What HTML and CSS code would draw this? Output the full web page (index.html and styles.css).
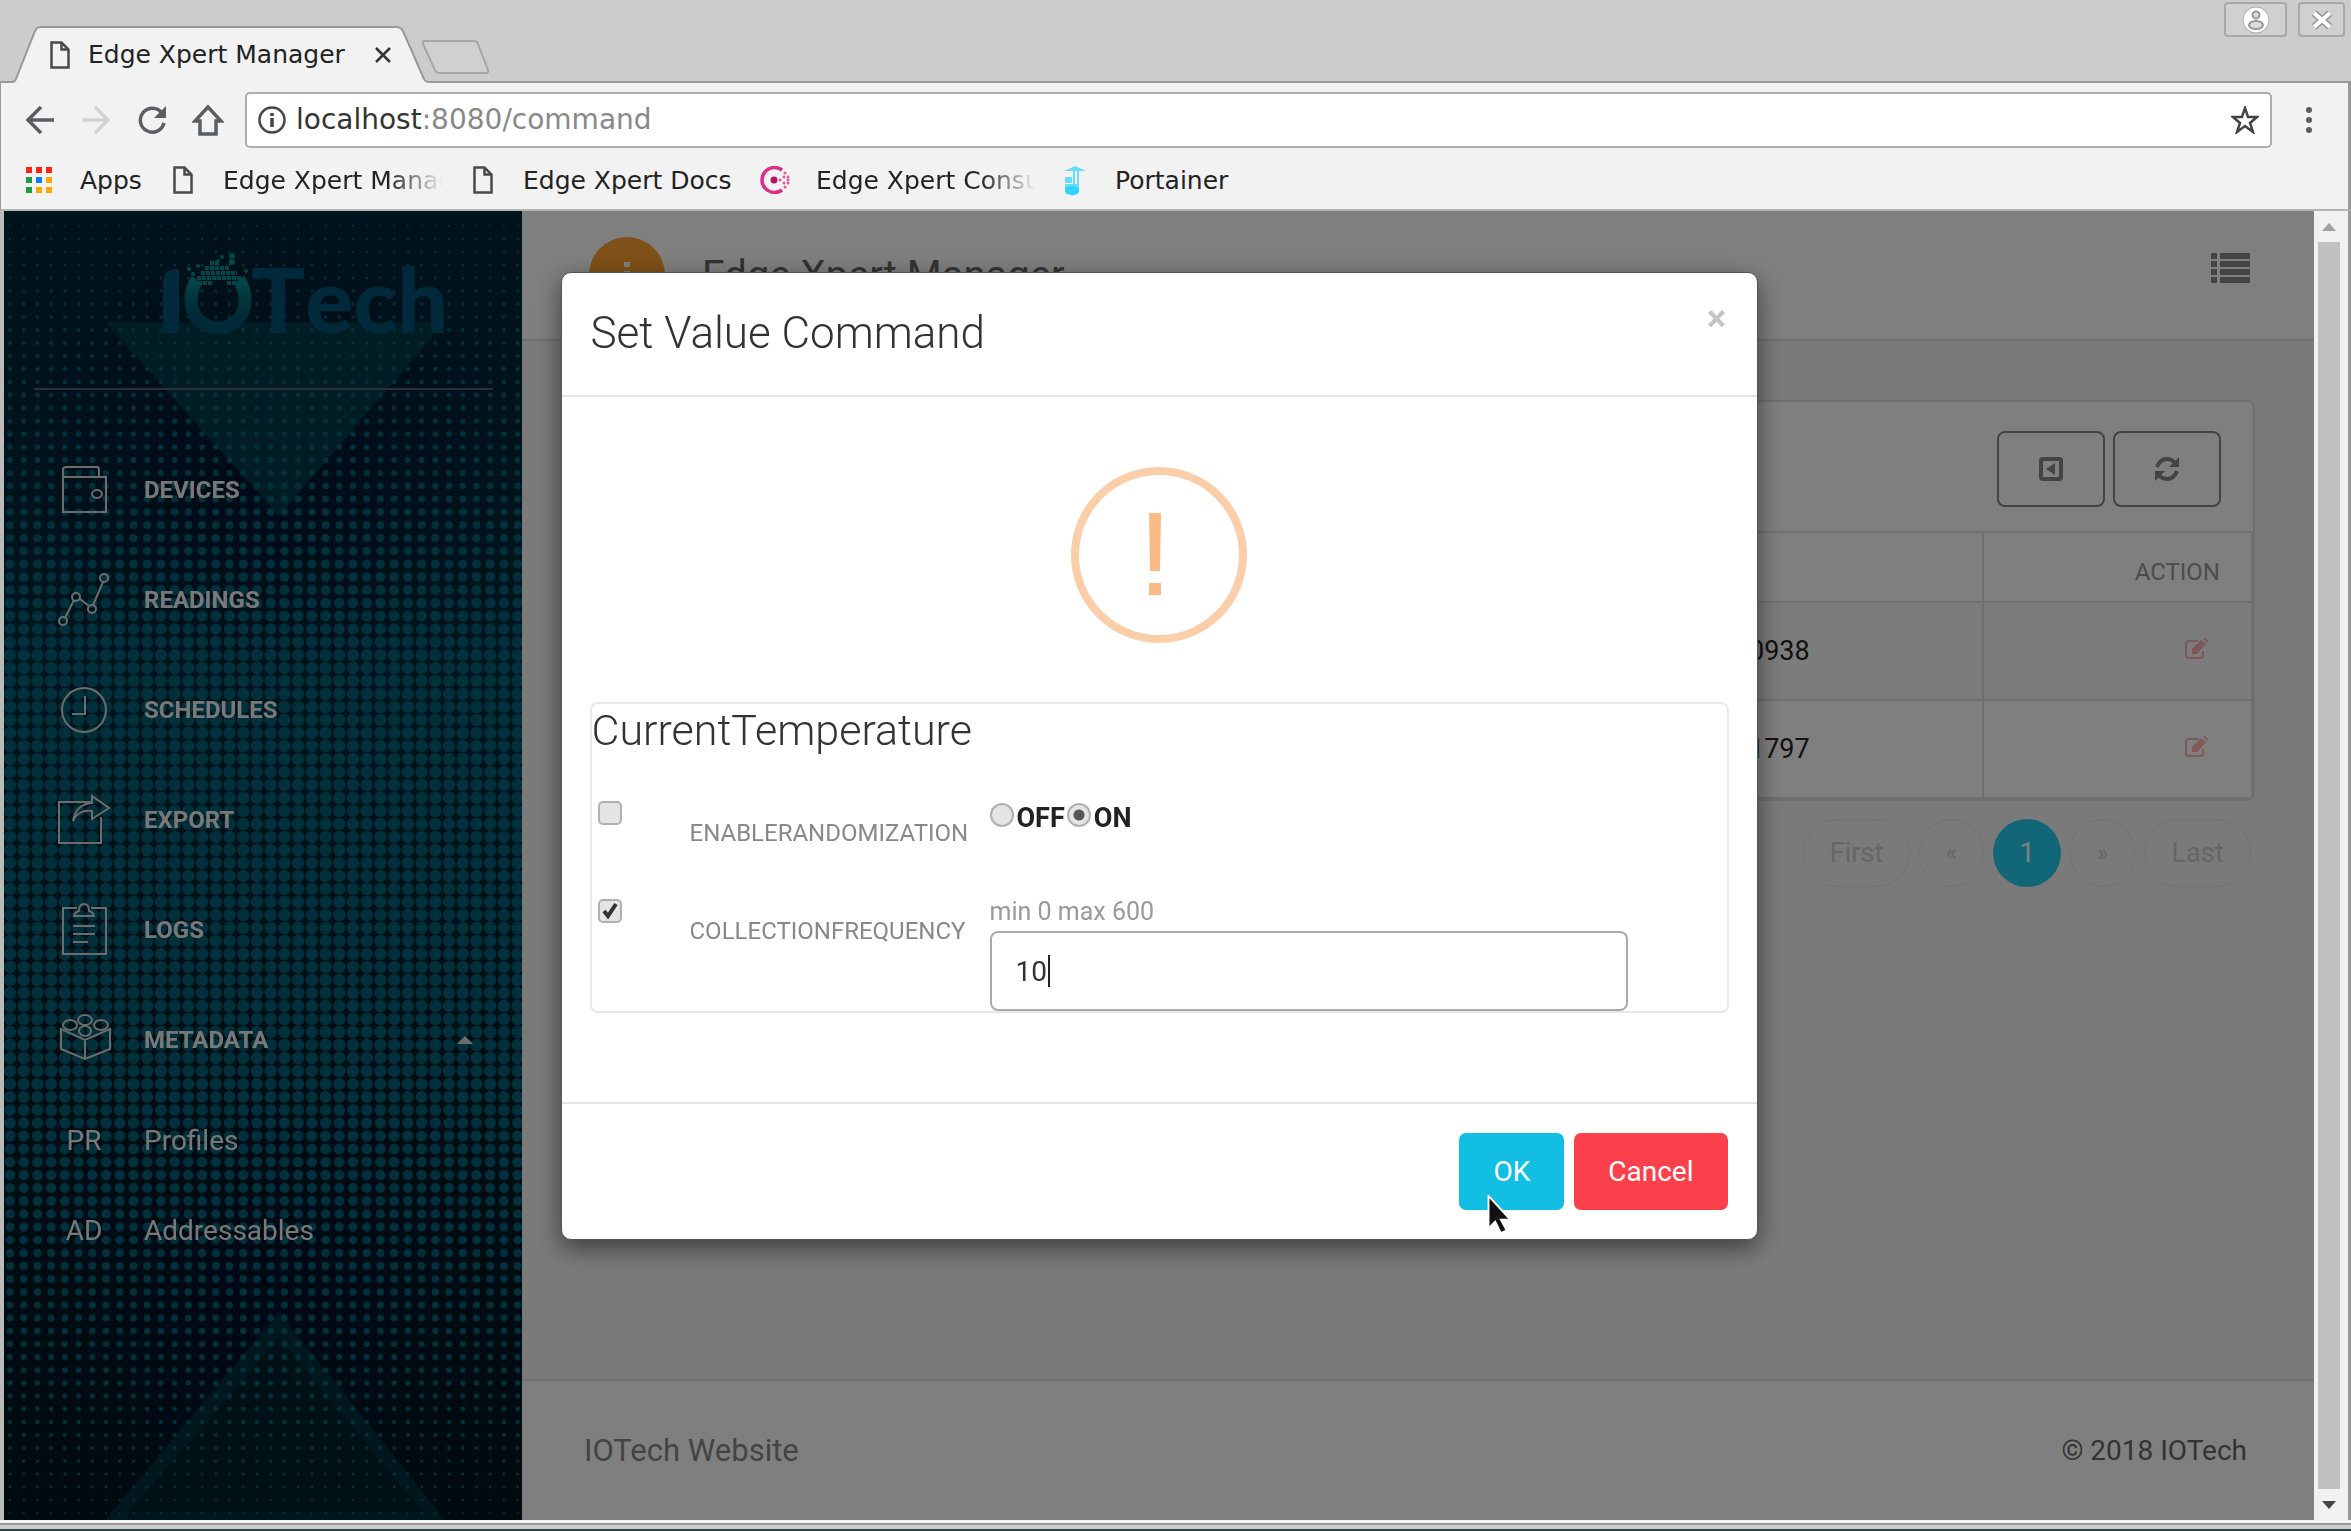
FILE: index.html
```html
<!DOCTYPE html>
<html lang="en">
<head>
<meta charset="utf-8">
<title>Edge Xpert Manager</title>
<link rel="stylesheet" href="styles.css">
</head>
<body>
<svg class="defs" aria-hidden="true">
  <symbol id="doc" viewBox="0 0 20 28"><path d="M1.5 1.5h10l7 7v18h-17zM11.500 1.500v7h7" fill="none" stroke="#4a4a4a" stroke-width="2.500"/></symbol>
  <symbol id="edit" viewBox="0 0 24 22"><path d="M14 3H5Q2 3 2 6v11q0 3 3 3h11q3 0 3-3v-4" fill="none" stroke="currentColor" stroke-width="2"/><path d="M8 16v-5l9-9 5 4-9 10zM19 0l1-1 4 4-1 2z" fill="currentColor"/></symbol>
</svg>
<div class="browser">
  <header class="tabstrip">
    <div class="tab">
      <svg class="tab-shape" viewBox="0 0 430 57" preserveAspectRatio="none"><path d="M-8 56H12Q15 56 16 53L35 5Q37 1 41 1H396Q401 1 403 5L424 53Q425 56 430 56V58H-8Z" fill="#f2f2f2" stroke="#989898" stroke-width="2"/></svg>
      <svg class="doc"><use href="#doc"/></svg>
      <span class="tab-title">Edge Xpert Manager</span>
      <button class="plain tab-close" aria-label="Close tab"><svg width="18" height="18" viewBox="0 0 18 18"><path d="M2 2l14 14M16 2L2 16" stroke="#333" stroke-width="2.500"/></svg></button>
    </div>
    <button class="plain new-tab" aria-label="New tab"><svg width="70" height="36" viewBox="0 0 70 36"><path d="M4 2H54Q57 2 58 5L68 31Q69 34 66 34H20Q16 34 15 31L3 5Q2 2 4 2Z" fill="#d0d0d0" stroke="#a6a6a6" stroke-width="2"/></svg></button>
    <div class="window-buttons">
      <button class="win-btn user" aria-label="Profile"><svg width="28" height="28" viewBox="0 0 28 28"><circle cx="14" cy="14" r="13" fill="#fff" stroke="#aaa"/><circle cx="14" cy="9" r="3.500" fill="#ddd" stroke="#999" stroke-width="2"/><ellipse cx="14" cy="19" rx="7" ry="4" fill="#ddd" stroke="#999" stroke-width="2"/></svg></button>
      <button class="win-btn" aria-label="Close window"><svg width="22" height="20" viewBox="0 0 22 20"><path d="M3 3l16 14M19 3L3 17" stroke="#9a9a9a" stroke-width="7"/><path d="M3 3l16 14M19 3L3 17" stroke="#fff" stroke-width="4"/></svg></button>
    </div>
  </header>
  <div class="toolbar">
    <button class="plain" aria-label="Back"><svg width="28" height="28" viewBox="0 0 28 28"><path d="M15 1L2 14l13 13M2 14h26" fill="none" stroke="#5a5d62" stroke-width="3.500"/></svg></button>
    <button class="plain" aria-label="Forward"><svg width="28" height="28" viewBox="0 0 28 28"><path d="M13 1l13 13-13 13M26 14H0" fill="none" stroke="#d3d3d3" stroke-width="3.500"/></svg></button>
    <button class="plain" aria-label="Reload"><svg width="28" height="28" viewBox="0 0 28 28"><path d="M24 7A12 12 0 1 0 26 17" fill="none" stroke="#5a5d62" stroke-width="3.500"/><path d="M28 0v12H16z" fill="#5a5d62"/></svg></button>
    <button class="plain home" aria-label="Home"><svg width="32" height="32" viewBox="0 0 32 32"><path d="M16 3L3 17h5v13h16V17h5z" fill="none" stroke="#5a5d62" stroke-width="3.500"/></svg></button>
    <div class="address">
      <svg width="28" height="28" viewBox="0 0 28 28"><circle cx="14" cy="14" r="12.500" fill="none" stroke="#444" stroke-width="2.500"/><path d="M14 12v9M14 7v3" stroke="#444" stroke-width="3.500"/></svg>
      <a class="url" href="#">localhost<span>:8080/command</span></a>
      <button class="plain" aria-label="Bookmark"><svg width="28" height="28" viewBox="0 0 28 28"><path d="M14 2l3 9h9l-7 6 3 9-8-6-8 6 3-9-7-6h9z" fill="none" stroke="#444" stroke-width="2.500"/></svg></button>
    </div>
    <button class="plain menu" aria-label="Menu"><svg width="8" height="28" viewBox="0 0 8 28"><circle cx="4" cy="4" r="3" fill="#5a5d62"/><circle cx="4" cy="14" r="3" fill="#5a5d62"/><circle cx="4" cy="24" r="3" fill="#5a5d62"/></svg></button>
  </div>
  <nav class="bookmarks">
    <a href="#" class="apps"><svg width="26" height="26" viewBox="0 0 26 26"><path d="M0 0h6v6H0zM10 0h6v6h-6zM20 0h6v6h-6z" fill="#fb2418"/><path d="M0 10h6v6H0zM0 20h6v6H0z" fill="#1e9a45"/><path d="M10 10h6v6h-6z" fill="#0b7cff"/><path d="M20 10h6v6h-6zM10 20h6v6h-6zM20 20h6v6h-6z" fill="#fba800"/></svg>Apps</a>
    <a href="#"><svg class="doc"><use href="#doc"/></svg><span class="clip">Edge Xpert Manager</span></a>
    <a href="#" class="docs"><svg class="doc"><use href="#doc"/></svg>Edge Xpert Docs</a>
    <a href="#" class="consul"><svg width="30" height="28" viewBox="0 0 30 28"><path d="M22 4A12.500 12.500 0 1 0 22 24" fill="none" stroke="#db2f87" stroke-width="3.500"/><circle cx="14" cy="14" r="3.500" fill="#a8195f"/><g fill="#db5a9e"><circle cx="20" cy="14" r="1.500"/><circle cx="24" cy="11" r="1.500"/><circle cx="24" cy="17" r="1.500"/><circle cx="25" cy="7" r="1.500"/><circle cx="25" cy="21" r="1.500"/><circle cx="28" cy="11" r="1.500"/><circle cx="28" cy="17" r="1.500"/><circle cx="28" cy="14" r="1.500"/></g></svg><span class="clip">Edge Xpert Consul</span></a>
    <a href="#" class="portainer"><svg width="24" height="32" viewBox="0 0 24 32"><path d="M1 7L12 2l11 5zM10 4h2v20h-2zM14 6h2v20h-2zM2 13h7v6H2zM2 20h13v6H2z" fill="#6adcfb"/><path d="M2 24q7-4 14 0v4q-3 4-8 3-5-1-6-3z" fill="#2fd3ff"/></svg>Portainer</a>
  </nav>
  <div class="viewport">
    <aside class="sidebar">
      <canvas class="dots"></canvas>
      <div class="brand">
        <svg class="logo" viewBox="0 0 290 90" role="img" aria-label="IOTech">
          <defs><linearGradient id="ring" x1="0" y1="0" x2="0" y2="1"><stop offset="0" stop-color="#008f8f"/><stop offset=".4" stop-color="#006c78"/><stop offset=".75" stop-color="#00546e"/></linearGradient></defs>
          <path d="M8 84V36Q8 20 20 20h4v64z" fill="#005478"/>
          <path d="M42 31Q36 39 36 52a27 27 0 0 0 54 0Q90 39 84 31" fill="none" stroke="url(#ring)" stroke-width="13"/>
          <g stroke="#008f8f" stroke-width="4" stroke-dasharray="4 1"><path d="M43 34h14M72 34h15M42 29h44M46 24h36M50 19h25M55 14h10"/></g>
          <g fill="#008f8f"><circle cx="34" cy="20" r="2"/><circle cx="38" cy="25" r="2"/><circle cx="43" cy="17" r="2"/><circle cx="67" cy="8" r="2"/><circle cx="77" cy="7" r="3"/><circle cx="77" cy="13" r="3"/><circle cx="63" cy="12" r="2"/><circle cx="91" cy="22" r="2"/></g>
          <text x="96" y="84" class="logo-text">Tech</text>
        </svg>
      </div>
      <nav>
        <a class="item" href="#"><svg viewBox="0 0 52 52"><rect x="5" y="13" width="43" height="35"/><path d="M5 13V6q0-3 3-3h31q2 0 2 3v7"/><ellipse cx="39" cy="30" rx="5" ry="4"/></svg>Devices</a>
        <a class="item" href="#"><svg viewBox="0 0 52 52"><circle cx="5" cy="47" r="4"/><circle cx="18" cy="23" r="4"/><circle cx="34" cy="35" r="4"/><circle cx="46" cy="4" r="4"/><path d="M7 44l9-18M22 25l9 7M35 31L45 8"/></svg>Readings</a>
        <a class="item" href="#"><svg viewBox="0 0 52 52"><circle cx="26" cy="26" r="22"/><path d="M27 12v18H14"/></svg>Schedules</a>
        <a class="item" href="#"><svg viewBox="0 0 52 52"><path d="M34 8H1v41h42V23"/><path d="M15 27Q18 10 34 9V2l17 12-17 11v-8Q20 15 15 27z"/></svg>Export</a>
        <a class="item" href="#"><svg viewBox="0 0 52 52"><path d="M19 4H5v46h43V4H33M16 12q1-4 5-5 0-7 5-7t5 7q4 1 5 5zM15 22h22M15 30h22M15 38h15"/></svg>Logs</a>
        <a class="item" href="#"><svg viewBox="0 0 52 52"><path d="M3 15v20l24 10 25-10V15L27 26zM27 26v19"/><ellipse cx="27" cy="6" rx="7" ry="5"/><ellipse cx="12" cy="11" rx="7" ry="5"/><ellipse cx="43" cy="11" rx="7" ry="5"/><ellipse cx="27" cy="17" rx="6" ry="5"/></svg>Metadata<i class="caret-up"></i></a>
        <a class="sub" href="#"><span>PR</span>Profiles</a>
        <a class="sub" href="#"><span>AD</span>Addressables</a>
      </nav>
    </aside>
    <main class="main">
      <header class="page-head">
        <span class="badge"><svg width="8" height="30" viewBox="0 0 8 30"><path d="M1 2h6v5H1zM1 11h6v18H1z" fill="#fff"/></svg></span>
        <h1>Edge Xpert Manager</h1>
        <button class="plain list" aria-label="List"><svg width="40" height="32" viewBox="0 0 40 32"><path d="M0 0h6v6H0zM9 0h30v6H9zM0 8h6v6H0zM9 8h30v6H9zM0 16h6v6H0zM9 16h30v6H9zM0 24h6v6H0zM9 24h30v6H9z" fill="#888"/></svg></button>
      </header>
      <section class="content">
        <div class="card">
          <div class="card-tools">
            <button class="outline" aria-label="Back"><svg width="24" height="24" viewBox="0 0 24 24"><rect x="2" y="2" width="20" height="20" rx="2" fill="none" stroke="#888" stroke-width="4"/><path d="M16 6v12l-9-6z" fill="#888"/></svg></button>
            <button class="outline" aria-label="Refresh"><svg width="26" height="24" viewBox="0 0 26 24"><path d="M3 10Q6 2 13 2q5 0 8 4M23 14q-3 8-10 8-5 0-8-4" fill="none" stroke="#888" stroke-width="4"/><path d="M25 0v10H15zM1 24V14h10z" fill="#888"/></svg></button>
          </div>
          <table>
            <thead><tr><th></th><th class="id"></th><th class="action">Action</th></tr></thead>
            <tbody>
              <tr><td></td><td class="id">0938</td><td class="action"><a href="#" aria-label="Edit"><svg width="24" height="22"><use href="#edit"/></svg></a></td></tr>
              <tr><td></td><td class="id">1797</td><td class="action"><a href="#" aria-label="Edit"><svg width="24" height="22"><use href="#edit"/></svg></a></td></tr>
            </tbody>
          </table>
        </div>
        <nav class="pager">
          <a href="#" class="wide">First</a><a href="#" class="small">«</a><a href="#" class="on">1</a><a href="#" class="small">»</a><a href="#" class="wide">Last</a>
        </nav>
      </section>
      <footer class="page-foot"><a href="#">IOTech Website</a><span>© 2018 IOTech</span></footer>
    </main>
    <div class="overlay">
      <form class="modal" role="dialog" aria-labelledby="dlg">
        <div class="modal-head"><h2 id="dlg">Set Value Command</h2><button type="button" class="plain close" aria-label="Close">×</button></div>
        <div class="modal-body">
          <svg class="warn" viewBox="0 0 176 176" role="img" aria-label="Warning"><circle cx="88" cy="88" r="84" fill="none" stroke="#facea8" stroke-width="8"/><path d="M78 46h12l-1 58H79zM78 116h12v12H78z" fill="#f8bb86"/></svg>
          <div class="params">
            <h2>CurrentTemperature</h2>
            <div class="param">
              <input type="checkbox" id="er" class="check">
              <label for="er" class="name">EnableRandomization</label>
              <div class="radios">
                <input type="radio" name="r" id="off"><label for="off">OFF</label><input type="radio" name="r" id="on" checked><label for="on">ON</label>
              </div>
            </div>
            <div class="param">
              <input type="checkbox" id="cf" class="check" checked>
              <label for="cf" class="name">CollectionFrequency</label>
              <div class="field">
                <label for="val">min 0 max 600</label>
                <input type="text" id="val" value="10">
                <i class="text-caret"></i>
              </div>
            </div>
          </div>
        </div>
        <div class="modal-foot">
          <button type="button" class="btn ok">OK<svg class="pointer" viewBox="0 0 26 42"><path d="M2 1v34l7-7 6 12 6-3-6-11h10z" fill="#111" stroke="#fff" stroke-width="2"/></svg></button>
          <button type="button" class="btn cancel">Cancel</button>
        </div>
      </form>
    </div>
    <div class="scrollbar"><button class="plain" aria-label="Scroll up"><i class="up"></i></button><div class="thumb"></div><button class="plain" aria-label="Scroll down"><i class="down"></i></button></div>
  </div>
  <div class="frame-bottom"></div>
</div>
<script src="dots.js"></script>
</body>
</html>
```
FILE: dots.js
```javascript
// Halftone backdrop of the sidebar: dots swell towards the middle, over two triangles.
(function () {
  var canvas = document.querySelector('.dots');
  var w = canvas.width = canvas.clientWidth;
  var h = canvas.height = canvas.clientHeight;
  var c = canvas.getContext('2d');

  function triangle(points, fill) {
    c.beginPath();
    points.forEach(function (p) { c.lineTo(p[0], p[1]); });
    c.closePath();
    c.fillStyle = fill;
    c.fill();
  }

  function glow(x, y, r) {
    var g = c.createRadialGradient(x, y, 0, x, y, r);
    g.addColorStop(0, 'rgba(0,16,42,.8)');
    g.addColorStop(1, 'rgba(0,16,42,0)');
    c.fillStyle = g;
    c.fillRect(0, 0, w, h);
  }

  var base = c.createLinearGradient(0, 0, 0, h);
  base.addColorStop(0, '#002638');
  base.addColorStop(0.35, '#002a3a');
  base.addColorStop(0.65, '#001c26');
  base.addColorStop(1, '#00161e');
  c.fillStyle = base;
  c.fillRect(0, 0, w, h);
  glow(w / 2, 260, 280);
  glow(w / 2, h - 210, 280);

  var mid = w / 2 + 16;
  triangle([[101, 111], [441, 111], [mid, 305]], '#003a46');
  triangle([[mid, h - 208], [mid - 174, h], [mid + 166, h]], '#002e3a');
  triangle([[mid, h - 182], [mid - 150, h - 8], [mid + 144, h - 8]], '#00222a');

  var stops = [[0, 1], [0.1, 2], [0.2, 3], [0.28, 4.8], [0.34, 6.2], [0.66, 6.2], [0.75, 5], [0.83, 3.6], [0.91, 2.5], [1, 1]];
  function radius(t) {
    for (var i = 1; i < stops.length; i++) {
      if (t <= stops[i][0]) {
        var a = stops[i - 1], b = stops[i];
        return a[1] + (b[1] - a[1]) * (t - a[0]) / (b[0] - a[0]);
      }
    }
    return 1;
  }
  for (var y = 15; y < h; y += 13) {
    c.fillStyle = '#006076';
    for (var x = 6; x < w + 6; x += 13.72) {
      c.beginPath();
      c.arc(x, y, radius(y / h), 0, Math.PI * 2);
      c.fill();
    }
  }
})();
```
FILE: styles.css
```css
* { box-sizing: border-box; }
body { margin: 0; font-family: Roboto, sans-serif; font-size: 27px; color: #252422; background: #ccc; }
a { color: inherit; text-decoration: none; }
h1, h2 { margin: 0; font-weight: 300; }
svg { display: block; flex: none; }
.defs { position: absolute; width: 0; height: 0; }
.plain { border: 0; padding: 0; background: none; display: flex; align-items: center; justify-content: center; font: inherit; color: inherit; }
.browser { display: flex; flex-direction: column; min-height: 100vh; font-family: Roboto, sans-serif; }

.tabstrip { display: flex; height: 83px; padding-top: 26px; background: #ccc; font-family: "DejaVu Sans", sans-serif; border-bottom: 2px solid #989898; }
.tab { position: relative; display: flex; align-items: center; width: 430px; height: 57px; padding-left: 50px; font-size: 25px; color: #222; }
.tab-shape { position: absolute; inset: 0; width: 100%; height: 100%; }
.doc { position: relative; width: 20px; height: 28px; }
.tab-title { position: relative; margin-left: 18px; width: 286px; white-space: nowrap; }
.tab-close { position: relative; }
.new-tab { align-self: flex-start; margin: 13px 0 0 -10px; }
.window-buttons { display: flex; gap: 11px; margin: -24px 6px 0 auto; }
.win-btn { display: flex; align-items: center; justify-content: center; width: 47px; height: 35px; padding: 0; border: 2px solid #a8a8a8; border-radius: 4px; background: #d0d0d0; }
.win-btn.user { width: 63px; }

.toolbar { display: flex; align-items: center; gap: 28px; height: 73px; padding: 0 35px 0 25px; border-right: 3px solid #999; border-left: 1px solid #999; background: #f2f2f2; }
.home { margin-left: -2px; }
.address { display: flex; align-items: center; flex: 1; height: 56px; margin-left: -7px; padding: 0 11px; border: 2px solid #adadad; border-radius: 5px; background: #fff; font-family: "DejaVu Sans", sans-serif; font-size: 28px; }
.url { flex: 1; margin-left: 10px; color: #333; }
.url span { color: #888; }
.menu { margin-left: 5px; }

.bookmarks { display: flex; align-items: center; height: 55px; padding: 0 0 5px 25px; border-bottom: 2px solid #b4b4b4; border-left: 1px solid #999; border-right: 3px solid #999; background: #f2f2f2; font-family: "DejaVu Sans", sans-serif; font-size: 25px; color: #222; }
.bookmarks a { display: flex; align-items: center; gap: 30px; height: 40px; width: 300px; white-space: nowrap; }
.bookmarks .apps { width: 147px; gap: 28px; }
.bookmarks .docs { width: 287px; }
.bookmarks .consul { width: 303px; gap: 26px; }
.bookmarks .portainer { gap: 28px; }
.clip { width: 220px; overflow: hidden; mask-image: linear-gradient(90deg, #000 75%, transparent); }

.viewport { position: relative; display: flex; flex: 1; border: solid #999; border-width: 0 3px 0 4px; border-left-color: #bbb; }
.sidebar { position: relative; width: 518px; flex: none; color: #f0f0f0; }
.dots { position: absolute; inset: 0; width: 100%; height: 100%; }
.brand { position: relative; margin: 0 29px 45px 30px; padding: 38px 0 49px 121px; border-bottom: 2px solid #546068; }
.logo { width: 290px; height: 90px; overflow: visible; }
.logo-text { font: 900 90px Lato, sans-serif; font-kerning: none; fill: #005478; }
.sidebar nav { position: relative; }
.item, .sub { display: flex; align-items: center; gap: 34px; padding-left: 54px; }
.item { height: 110px; font-size: 24px; font-weight: 700; text-transform: uppercase; }
.item svg { width: 52px; height: 52px; fill: none; stroke: #d8d8d8; stroke-width: 2; overflow: visible; }
.sub { height: 90px; font-size: 28px; }
.sub span { width: 52px; text-align: center; }
.caret-up { margin: 0 49px 0 auto; border: 8px solid transparent; border-top: 0; border-bottom-color: #d8d8d8; }

.main { display: flex; flex-direction: column; flex: 1; min-width: 0; background: #f4f4f4; }
.page-head { display: flex; align-items: center; height: 130px; padding: 0 63px 0 67px; background: #fff; border-bottom: 2px solid #dedede; }
.badge { display: flex; align-items: center; justify-content: center; width: 76px; height: 76px; border-radius: 50%; background: #ffa12e; }
.page-head h1 { margin-left: 37px; font-size: 40px; font-weight: 400; color: #666; }
.list { margin: 0 0 12px auto; }
.content { padding: 59px 59px 0; }
.card { background: #fff; border: 2px solid #dedede; border-radius: 8px; }
.card-tools { display: flex; justify-content: flex-end; gap: 8px; padding: 29px 32px 24px; }
.outline { display: flex; align-items: center; justify-content: center; width: 108px; height: 76px; border: 2px solid #888; border-radius: 8px; background: none; }
table { width: 100%; border-collapse: collapse; table-layout: fixed; }
th, td { height: 98px; padding: 0 0 0 22px; border: 2px solid #dedede; text-align: left; }
th { height: 70px; font-size: 24px; font-weight: 400; color: #999; text-transform: uppercase; padding-top: 10px; }
tbody tr:first-child { background: #f8f8f8; }
.id { width: 257px; }
.id + .action { width: 269px; padding-right: 31px; text-align: right; }
td.action a { display: inline-block; margin-right: 12px; color: #ff8f8f; opacity: .7; }
.pager { display: flex; justify-content: flex-end; align-items: center; gap: 9px; margin: 18px 4px; color: #ccc; }
.pager a { display: flex; align-items: center; justify-content: center; width: 65px; height: 68px; border: 1px solid #e6e6e6; border-radius: 34px; }
.pager .wide { width: 107px; }
.pager .small { font-size: 24px; }
.pager .on { width: 68px; border: 0; background: #23ccef; color: #fff; }
.page-foot { display: flex; align-items: center; justify-content: space-between; height: 141px; margin-top: auto; padding: 0 67px 0 62px; background: #fff; border-top: 2px solid #dedede; font-size: 28px; color: #666; }
.page-foot a { font-size: 31px; color: #888; }

.scrollbar { display: flex; flex-direction: column; width: 34px; flex: none; padding-right: 5px; background: #f1f1f1; }
.scrollbar .plain { height: 31px; }
.thumb { flex: 1; margin: 0 3px 0 4px; background: #c1c1c1; }
.up, .down { border: 7px solid transparent; }
.up { border-top: 0; border-bottom: 8px solid #a0a0a0; }
.down { border-bottom: 0; border-top: 8px solid #444; }
.frame-bottom { height: 11px; background: linear-gradient(#f2f2f2 3px, #999 3px 5px, #ccc 5px 9px, #2f4a4c 9px); }

.overlay { position: absolute; inset: 0 34px 0 0; display: flex; justify-content: center; align-items: flex-start; padding-top: 61px; background: rgba(0, 0, 0, .5); }
.modal { width: 1197px; background: #fff; border: 1px solid #555; border-radius: 10px; box-shadow: 0 8px 24px rgba(0, 0, 0, .5); }
.modal-head { display: flex; justify-content: space-between; align-items: flex-start; height: 124px; padding: 34px 28px 0 29px; border-bottom: 2px solid #e5e5e5; }
h2 { font-size: 44px; line-height: 52px; color: #333; }
.close { height: 24px; width: 24px; font-size: 36px; font-weight: 700; color: #c4c4c4; }
.modal-body { padding: 70px 28px 89px 28px; }
.warn { width: 176px; height: 176px; margin: 0 auto 59px; }
.params { border: 2px solid #e8e8e8; border-radius: 8px; }
.param { display: grid; grid-template-columns: 98px 300px 638px; align-items: start; min-height: 98px; }
.params h2 { margin-bottom: 39px; font-size: 43px; }
.check { margin: 6px 0 0 6px; }
input[type=checkbox], input[type=radio] { appearance: none; width: 24px; height: 24px; border: 2px solid #b0b0b0; border-radius: 5px; background: #e4e4e4; flex: none; }
input[type=checkbox]:checked { background: #e4e4e4 url("data:image/svg+xml,%3Csvg xmlns='http://www.w3.org/2000/svg' viewBox='0 0 20 20'%3E%3Cpath d='M4 10l4 5 8-12' fill='none' stroke='%23333' stroke-width='4'/%3E%3C/svg%3E"); }
input[type=radio] { margin: 0 3px 6px 0; border-radius: 50%; }
input[type=radio]:checked { margin-left: 2px; background: radial-gradient(#555 5px, #e4e4e4 6px); }
.name { margin-top: 22px; font-size: 24px; line-height: 32px; text-transform: uppercase; color: #888; }
.radios { display: flex; align-items: center; height: 32px; margin-top: 7px; font-weight: 700; color: #222; }
.field { position: relative; display: grid; gap: 3px; padding-top: 3px; }
.field label { font-size: 25px; line-height: 32px; color: #999; }
.field input { width: 100%; height: 80px; padding: 0 24px; border: 2px solid #a9a9a9; border-radius: 8px; font: 28px Roboto, sans-serif; color: #333; }
.text-caret { position: absolute; left: 58px; bottom: 24px; width: 2px; height: 32px; background: #222; }
.modal-foot { display: flex; justify-content: flex-end; gap: 10px; padding: 29px 29px; border-top: 2px solid #e5e5e5; }
.btn { position: relative; height: 77px; border: 0; border-radius: 7px; padding: 0 34px; font: 28px Roboto, sans-serif; color: #fff; }
.ok { background: #12bfe2; }
.cancel { background: #fc414c; }
.pointer { position: absolute; left: 27px; top: 62px; width: 26px; height: 40px; }
```
